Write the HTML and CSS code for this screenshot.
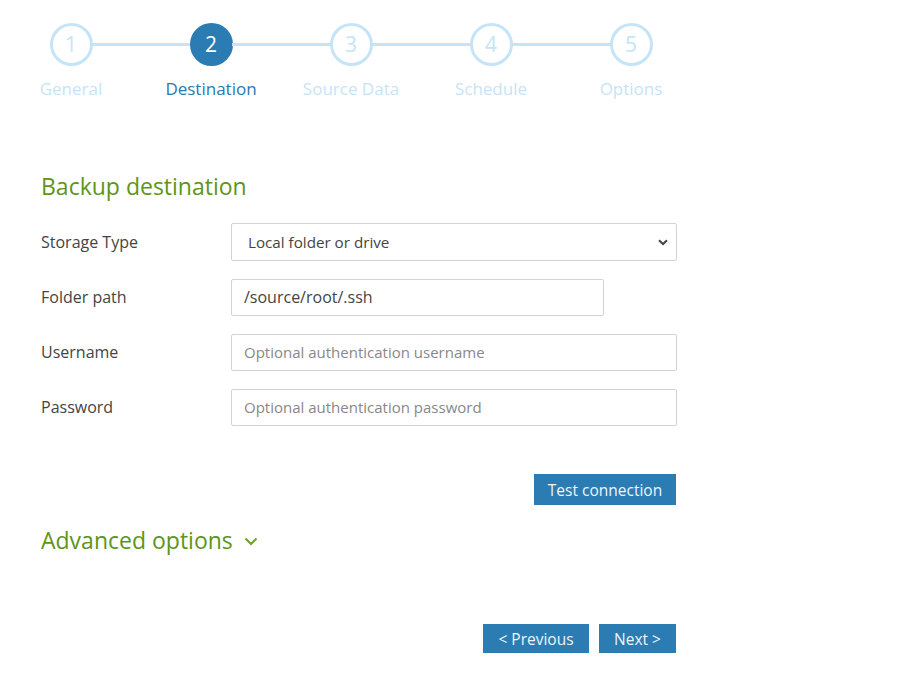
FILE: index.html
```html
<!DOCTYPE html>
<html>
<head>
<meta charset="utf-8">
<link rel="stylesheet" href="styles.css">
</head>
<body>
<div class="page">
  <div class="stepper">
    <div class="step">
      <div class="circle">1</div>
      <div class="step-label">General</div>
    </div>
    <div class="step active">
      <div class="circle">2</div>
      <div class="step-label">Destination</div>
    </div>
    <div class="step">
      <div class="circle">3</div>
      <div class="step-label">Source Data</div>
    </div>
    <div class="step">
      <div class="circle">4</div>
      <div class="step-label">Schedule</div>
    </div>
    <div class="step last">
      <div class="circle">5</div>
      <div class="step-label">Options</div>
    </div>
  </div>

  <div class="form">
    <h2 class="section-title">Backup destination</h2>

    <div class="row">
      <label class="label">Storage Type</label>
      <div class="select">
        <span>Local folder or drive</span>
        <svg class="select-arrow" width="10" height="7" viewBox="0 0 10 7"><path d="M1 1.2 L5 5 L9 1.2" fill="none" stroke="#444" stroke-width="2"/></svg>
      </div>
    </div>
    <div class="row">
      <label class="label">Folder path</label>
      <div class="input short">/source/root/.ssh</div>
    </div>
    <div class="row">
      <label class="label">Username</label>
      <div class="input placeholder">Optional authentication username</div>
    </div>
    <div class="row">
      <label class="label">Password</label>
      <div class="input placeholder">Optional authentication password</div>
    </div>

    <div class="actions test">
      <button class="btn btn-test">Test connection</button>
    </div>

    <h2 class="advanced">Advanced options
      <svg class="chev" width="14" height="9" viewBox="0 0 14 9"><path d="M1.5 1.5 L7 7 L12.5 1.5" fill="none" stroke="#6aa825" stroke-width="2.2"/></svg>
    </h2>

    <div class="actions nav">
      <button class="btn btn-prev">&lt; Previous</button>
      <button class="btn btn-next">Next &gt;</button>
    </div>
  </div>
</div>
</body>
</html>
```
FILE: styles.css
```css
* { box-sizing: border-box; }
body {
  margin: 0;
  background: #fff;
  font-family: "Open Sans", "Liberation Sans", sans-serif;
  color: #444;
}
.page {
  width: 700px;
  margin-left: 1px;
  padding-top: 23px;
}
.stepper {
  display: flex;
}
.step {
  width: 140px;
  display: flex;
  flex-direction: column;
  align-items: center;
  position: relative;
}
.step::after {
  content: "";
  position: absolute;
  top: 20px;
  left: 91px;
  width: 99px;
  height: 3px;
  background: #c6e4f7;
}
.step.last::after { display: none; }
.circle {
  width: 43px;
  height: 43px;
  border-radius: 50%;
  border: 3.5px solid #c6e4f7;
  color: #c6e4f7;
  display: flex;
  align-items: center;
  justify-content: center;
  font-size: 21px;
  line-height: 1;
  background: #fff;
}
.step.active .circle {
  background: #2a7cb2;
  border-color: #2a7cb2;
  color: #fff;
}
.step-label {
  margin-top: 12px;
  font-size: 17px;
  color: #c6e4f7;
  white-space: nowrap;
  line-height: 22px;
}
.step.active .step-label { color: #2a78ad; }

.form {
  padding-left: 40px;
  width: 676px;
  padding-top: 71px;
}
.section-title {
  margin: 0 0 22px 0;
  font-weight: normal;
  font-size: 23px;
  line-height: 30px;
  color: #5e9519;
}
.row {
  display: flex;
  align-items: center;
  height: 38px;
  margin-bottom: 17px;
}
.label {
  width: 190px;
  font-size: 16px;
  color: #444;
}
.select, .input {
  width: 446px;
  height: 37px;
  border: 1px solid #d3d3d3;
  border-radius: 2px;
  font-size: 16px;
  color: #444;
  display: flex;
  align-items: center;
  padding: 0 12px;
}
.select {
  height: 38px;
  padding-left: 16px;
  justify-content: space-between;
  padding-right: 8px;
  font-size: 15.2px;
}
.input.short { width: 373px; }
.input.placeholder { color: #888; font-size: 15px; }

.actions {
  display: flex;
  justify-content: flex-end;
  gap: 10px;
}
.actions.test {
  margin-top: 48px;
  padding-right: 1px;
}
.btn {
  border: none;
  background: #2a7cb2;
  color: #eef5fb;
  font-family: inherit;
  font-size: 15.5px;
  border-radius: 0;
  padding: 0;
  height: 31px;
  white-space: nowrap;
}
.btn-test { width: 142px; }
.btn-prev, .btn-next { height: 29px; }
.btn-prev { width: 106px; }
.btn-next { width: 77px; }
.advanced {
  margin: 18px 0 0 0;
  font-weight: normal;
  font-size: 23px;
  line-height: 34px;
  color: #5e9519;
  display: flex;
  align-items: center;
  gap: 11px;
}
.chev { margin-top: 2px; }
.actions.nav {
  margin-top: 67px;
  padding-right: 1px;
}
```
